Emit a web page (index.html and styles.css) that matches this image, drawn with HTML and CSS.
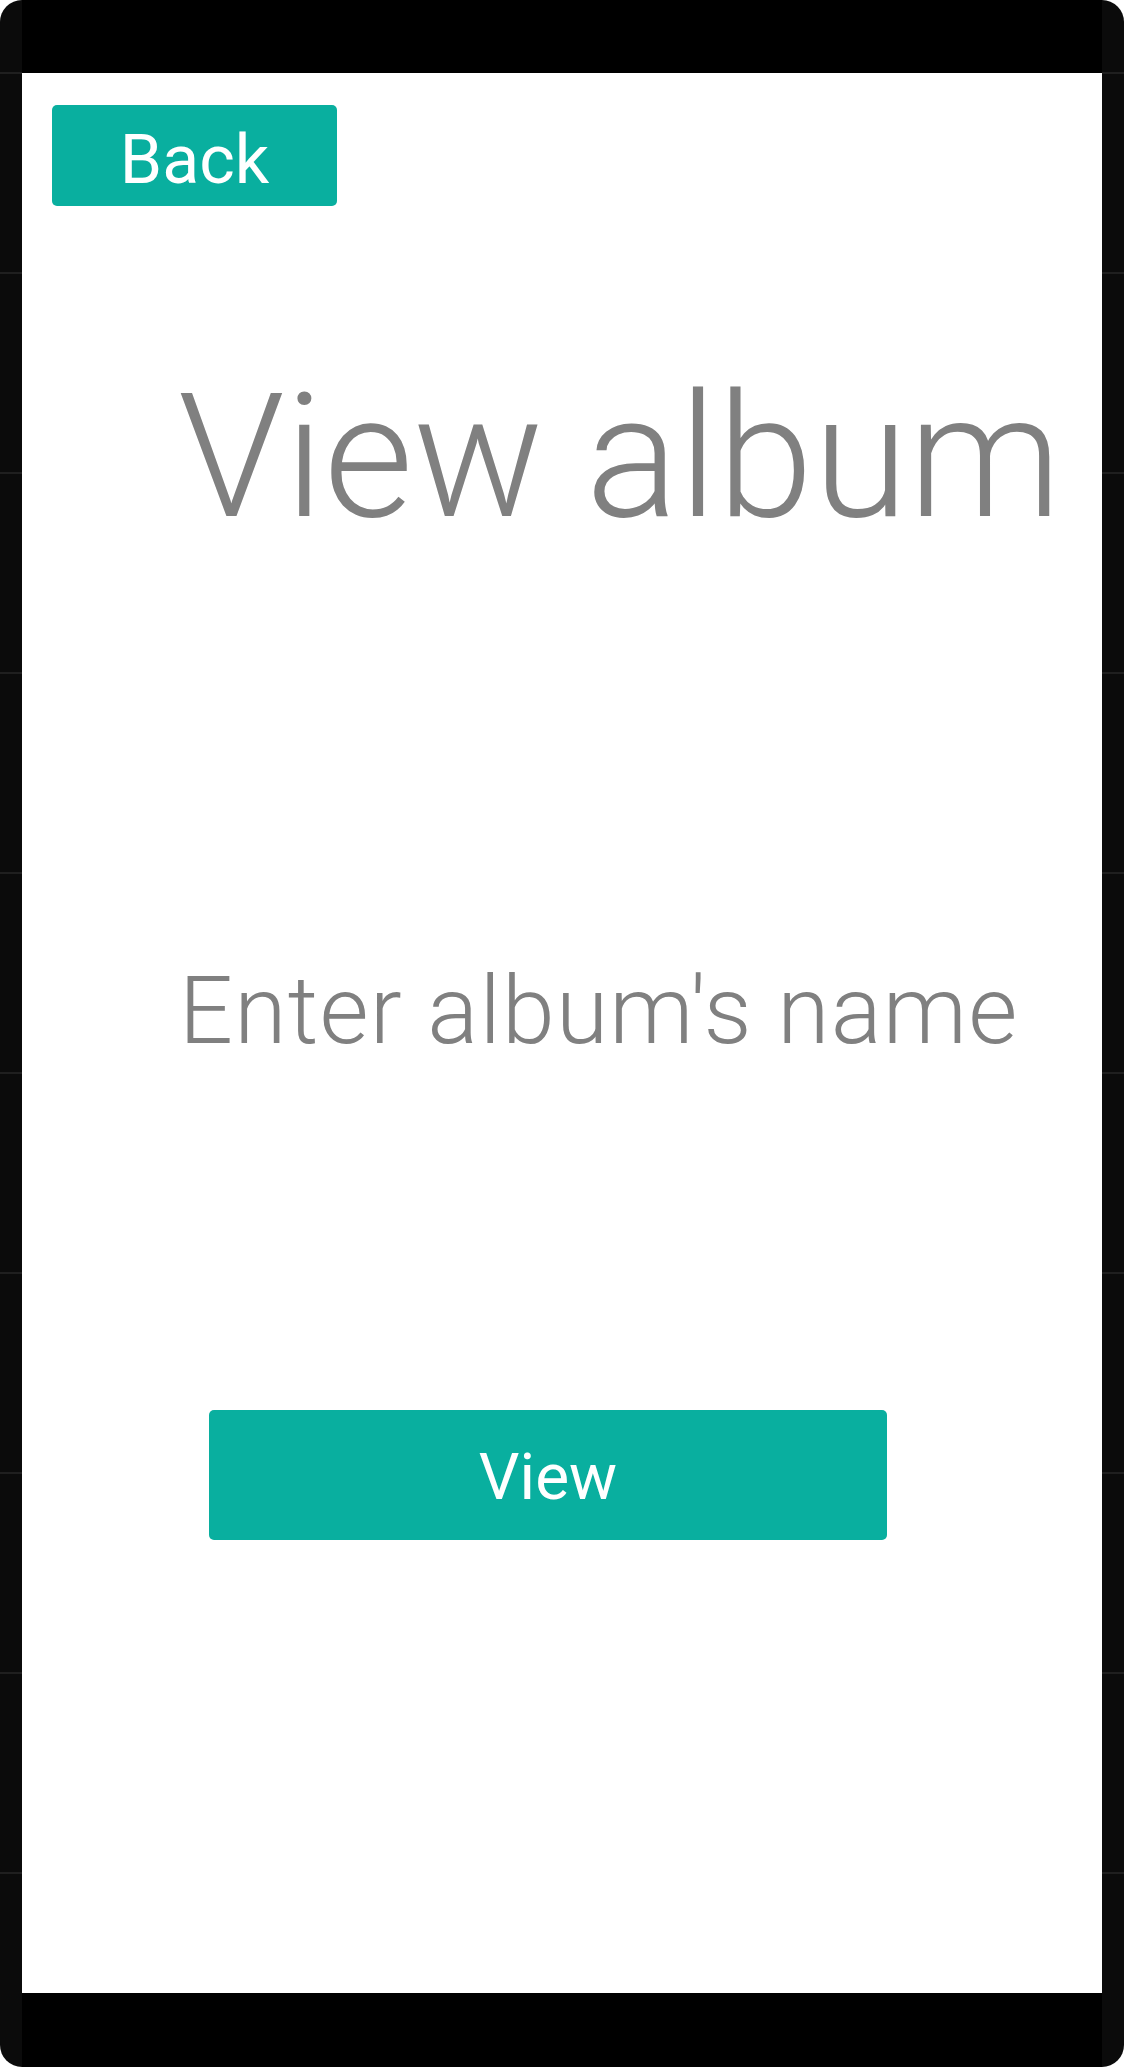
FILE: index.html
```html
<!DOCTYPE html>
<html>
<head>
<meta charset="utf-8">
<link rel="stylesheet" href="styles.css">
</head>
<body>
<div class="device">
  <div class="column">
    <div class="top-bar"></div>
    <div class="screen">
      <div class="btn btn-back">Back</div>
      <h1 class="title">View album</h1>
      <p class="prompt">Enter album's name</p>
      <div class="btn btn-view">View</div>
    </div>
    <div class="bottom-bar"></div>
  </div>
</div>
</body>
</html>
```
FILE: styles.css
```css
html, body {
  margin: 0;
  padding: 0;
  background: #ffffff;
}
.device {
  width: 1124px;
  height: 2067px;
  box-sizing: border-box;
  padding: 0 22px;
  border-radius: 22px;
  background-color: #0b0b0b;
  background-image: repeating-linear-gradient(to bottom, transparent 0 72px, #1f1f1f 72px 74px, transparent 74px 200px);
  display: flex;
  overflow: hidden;
}
.column {
  flex: 1;
  display: flex;
  flex-direction: column;
}
.top-bar {
  height: 73px;
  background: #000;
}
.bottom-bar {
  height: 74px;
  background: #000;
}
.screen {
  height: 1920px;
  background: #fff;
  display: flex;
  flex-direction: column;
  align-items: flex-start;
  font-family: Roboto, "Noto Sans", sans-serif;
}
.btn {
  background: #09af9f;
  color: #ffffff;
  border-radius: 5px;
  display: flex;
  align-items: center;
  justify-content: center;
  font-weight: 400;
  line-height: 1;
  box-sizing: border-box;
}
.btn-back {
  margin: 32px 0 0 30px;
  width: 285px;
  height: 101px;
  padding-top: 9px;
  font-size: 68px;
}
.title {
  margin: 165px 0 0 156px;
  font-size: 173px;
  font-weight: 300;
  line-height: 173px;
  color: #808080;
  white-space: nowrap;
}
.prompt {
  margin: 419px 0 0 157px;
  font-size: 95px;
  font-weight: 300;
  letter-spacing: 1.2px;
  line-height: 95px;
  color: #808080;
  white-space: nowrap;
}
.btn-view {
  margin: 352px 0 0 187px;
  width: 678px;
  height: 130px;
  padding-top: 5px;
  font-size: 64px;
}
```
